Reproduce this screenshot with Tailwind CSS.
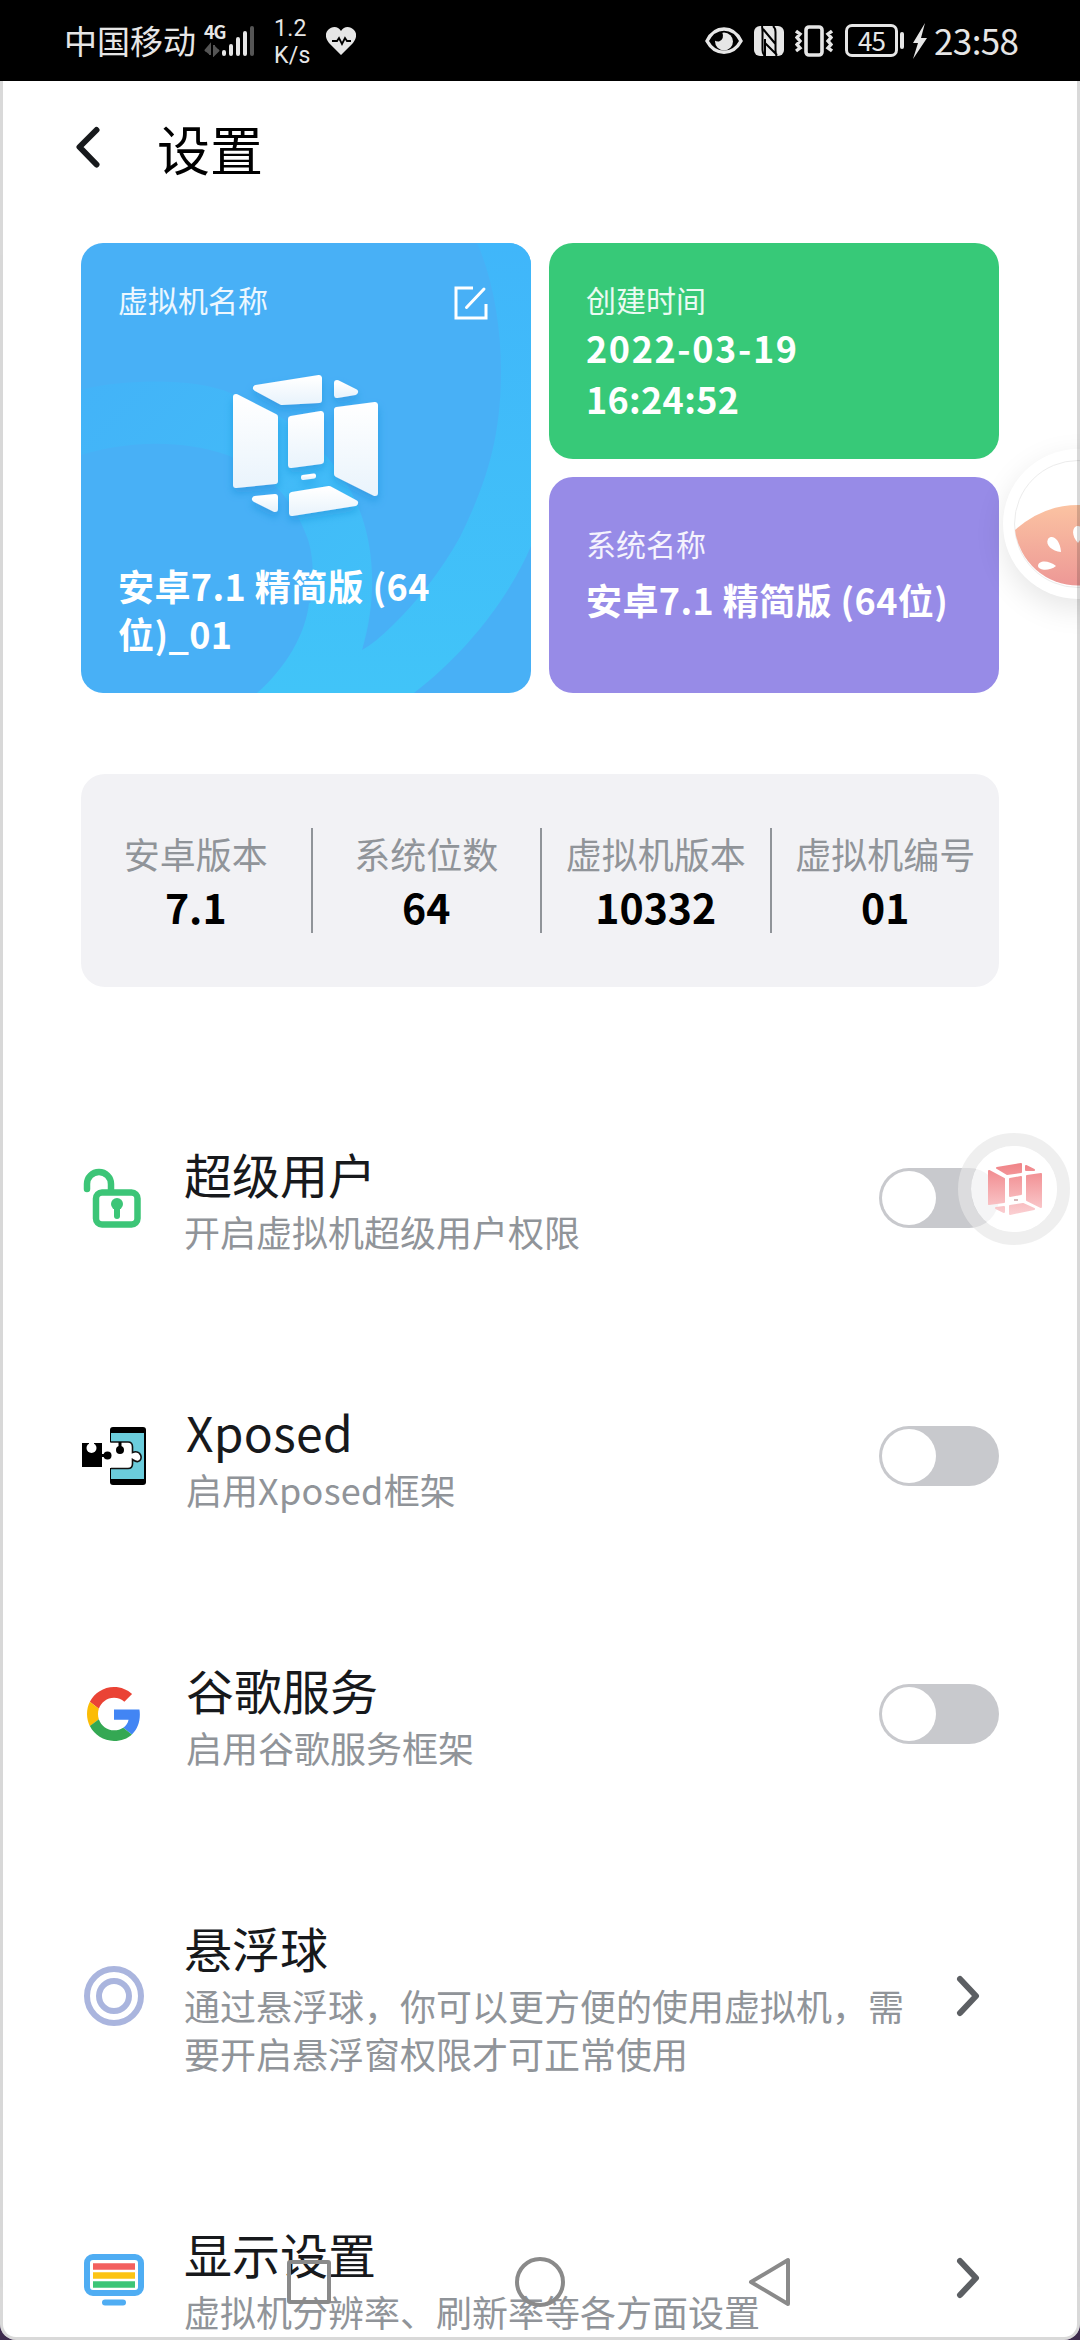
<!DOCTYPE html>
<html lang="zh-CN">
<head>
<meta charset="utf-8">
<title>设置</title>
<script src="https://cdn.jsdelivr.net/npm/@tailwindcss/browser@4"></script>
</head>
<body class="relative w-[1080px] h-[2340px] overflow-hidden bg-[#3d2b4d] font-['Noto_Sans_CJK_SC',sans-serif]">
<div class="relative w-[1080px] h-[2340px] overflow-hidden bg-white rounded-b-[16px] flex flex-col">

  <!-- status bar -->
  <header class="h-[81px] shrink-0 bg-black text-[#e6e6e6] flex items-center justify-between pl-[64px] pr-[62px]">
    <div class="flex items-center h-full">
      <span class="text-[33px] leading-[81px] w-[140px] whitespace-nowrap">中国移动</span>
      <div class="relative w-[52px] h-[32px]">
        <span class="absolute left-0 top-[-3px] text-[18px] leading-[18px] font-bold tracking-[-1px]">4G</span>
        <svg class="absolute inset-0" width="52" height="32" viewBox="0 0 52 32">
          <path d="M1 26L6 20V30M10 20V30L15 25" fill="#555" stroke="#555" stroke-width="2"/>
          <g stroke="#e6e6e6" stroke-width="4" stroke-linecap="round"><path d="M20 27v2M27 21v8M34 14v15M41 8v21"/><path d="M48 3v26" stroke="#555"/></g>
        </svg>
      </div>
      <div class="ml-[18px] mt-[2px] w-[52px] font-[Roboto] text-[23px] leading-[27px] tracking-[0.3px] flex flex-col"><span>1.2</span><span>K/s</span></div>
      <svg width="30" height="28" viewBox="0 0 30 28"><path d="M15 28L3 16C-1 11-1 6 2 3C6-1 12-1 15 4C18-1 24-1 28 3C31 6 31 11 27 16Z" fill="#e6e6e6"/><path d="M6 14h5l2-3 3 6 3-6 2 3h4" stroke="#000" stroke-width="1.8" fill="none"/></svg>
    </div>
    <div class="flex items-center h-full">
      <svg width="38" height="28" viewBox="0 0 38 28" class="mr-[11px]"><path d="M2 14C10-2 28-2 36 14C28 29 10 29 2 14Z" fill="none" stroke="#e6e6e6" stroke-width="3.4"/><circle cx="19" cy="14.500" r="9" fill="#e6e6e6"/><path d="M9 14V8L17 4.500Q20 12 14 14.500Q12 15 9 13Z" fill="#000"/></svg>
      <svg width="30" height="30" viewBox="0 0 30 30" class="mr-[11px]"><rect width="30" height="30" rx="6" fill="#e6e6e6"/><path d="M8 0Q8.500 3 8.500 6V24Q8.500 28 11 30M19 0Q21.500 2 21.500 6V24Q21.500 27 22.500 30M9 3L21.500 18M11 13V30M11 17L23 29" fill="none" stroke="#000" stroke-width="2"/></svg>
      <svg width="38" height="32" viewBox="0 0 38 32" class="mr-[12px]" fill="none" stroke="#e6e6e6" stroke-width="3.600"><rect x="11" y="2" width="16" height="28" rx="3"/><path d="M1 6l4 3-3 3.500 3 3.500-3 3.500 3 3.500-4 3M37 6l-4 3 3 3.500-3 3.500 3 3.500-3 3.500 4 3" stroke-width="3.4"/></svg>
      <div class="w-[53px] h-[33px] border-[3px] border-[#e6e6e6] rounded-[7px] flex items-center justify-center text-[26px] leading-[26px] tracking-[-1px] pb-[2px]">45</div>
      <div class="w-[4px] h-[17px] rounded-[2px] bg-[#e6e6e6] ml-[2px] mr-[8px]"></div>
      <svg width="15" height="36" viewBox="0 0 15 36" class="mr-[7px]"><path d="M13 0L1 20h5L1 36L15 15H9z" fill="#e6e6e6"/></svg>
      <span class="text-[35px] leading-[78px] tracking-[-0.600px] w-[84px] whitespace-nowrap pb-[2px]">23:58</span>
    </div>
  </header>

  <!-- title bar -->
  <div class="h-[162px] shrink-0 flex items-start pl-[75px] pt-[27px]">
    <svg width="28" height="42" viewBox="0 0 28 42" class="mt-[18px] mr-[54px]"><path d="M21.500 4L4.500 21L21.500 38.500" fill="none" stroke="#17191c" stroke-width="6" stroke-linecap="round" stroke-linejoin="round"/></svg>
    <h1 class="text-[53px] leading-[80px] text-black">设置</h1>
  </div>

  <!-- info cards -->
  <section class="mx-[81px] h-[450px] shrink-0 grid grid-cols-2 grid-rows-2 gap-[18px]">
    <div class="relative row-span-2 rounded-[22px] overflow-hidden bg-[#48b0f6] text-white">
      <svg class="absolute inset-0" width="450" height="450" viewBox="0 0 450 450">
        <defs>
          <linearGradient id="sweep" x1="0" y1="0" x2="0" y2="1"><stop offset="0" stop-color="#40b6fa"/><stop offset="1" stop-color="#41c4f8"/></linearGradient>
          <linearGradient id="arc" x1="0" y1="0" x2="1" y2="1"><stop offset="0" stop-color="#43b3f8"/><stop offset="1" stop-color="#41c1f8"/></linearGradient>
          <linearGradient id="panel" x1="0" y1="0" x2="0" y2="1"><stop offset="0" stop-color="#fff"/><stop offset="1" stop-color="#eaf4fc"/></linearGradient>
          <filter id="lift" x="-20%" y="-20%" width="140%" height="150%"><feDropShadow dx="0" dy="5" stdDeviation="4" flood-color="#1f86d0" flood-opacity=".45"/></filter>
        </defs>
        <path d="M0 147C30 138 110 132 152 151C220 175 265 225 281 274C295 315 294 365 281 407L209 414C235 375 236 320 226 294C210 250 180 225 146 212C100 196 45 198 0 212Z" fill="url(#arc)"/>
        <path d="M396 0C412 35 420 85 420 127C420 190 408 235 379 294C360 328 335 360 312 382C300 394 290 402 281 407L290 360L228 360C225 390 205 425 176 450H333C385 410 428 355 450 303V0Z" fill="url(#sweep)"/>
        <g fill="url(#panel)" stroke="url(#panel)" stroke-width="6" stroke-linejoin="round" filter="url(#lift)">
          <path d="M175 145L238 135V157L201 159Z"/><path d="M256 140L274 149L256 152Z"/>
          <path d="M155 154L194 174V238L155 242Z"/><path d="M210 176L240 171V218L210 222Z"/>
          <path d="M256 167L294 162V250L256 231Z"/><path d="M174 256L194 254V266Z"/>
          <path d="M211 252L248 246L274 260L211 270Z"/><path d="M222 234L233 232.500V233.500L222 235Z" stroke-width="4"/>
        </g>
        <g fill="none" stroke="#fff" stroke-width="3"><path d="M392 45H375V75H405V61"/><path d="M385.500 64.500L403 46" stroke-linecap="round"/></g>
      </svg>
      <div class="relative px-[37px] pt-[34px] text-[30px] leading-[44px] text-white/90">虚拟机名称</div>
      <div class="relative pl-[37px] pt-[240px] text-[36px] leading-[48px] font-bold whitespace-nowrap tracking-[0.400px]">安卓7.1 精简版 (64<br>位)_01</div>
    </div>
    <div class="rounded-[24px] bg-[#37c978] pl-[37px] pt-[34px] text-white">
      <div class="text-[30px] leading-[44px] text-white/90">创建时间</div>
      <div class="pt-px text-[36px] leading-[51px] font-bold"><span class="tracking-[1.600px]">2022-03-19</span><br><span class="tracking-[0.300px]">16:24:52</span></div>
    </div>
    <div class="rounded-[24px] bg-[#978be7] pl-[37px] pt-[44px] text-white">
      <div class="text-[30px] leading-[44px] text-white/90">系统名称</div>
      <div class="pt-[9px] text-[36px] leading-[51px] font-bold whitespace-nowrap tracking-[0.400px]">安卓7.1 精简版 (64位)</div>
    </div>
  </section>

  <!-- numbers -->
  <section class="mx-[81px] mt-[81px] h-[213px] shrink-0 rounded-[24px] bg-[#f2f2f5] grid grid-cols-4 items-center text-center">
    <div class="h-[105px]"><div class="text-[36px] leading-[51px] text-[#909499]">安卓版本</div><div class="text-[41px] leading-[54px] font-bold">7.1</div></div>
    <div class="h-[105px] border-l-2 border-[#909499]"><div class="text-[36px] leading-[51px] text-[#909499]">系统位数</div><div class="text-[41px] leading-[54px] font-bold">64</div></div>
    <div class="h-[105px] border-l-2 border-[#909499]"><div class="text-[36px] leading-[51px] text-[#909499]">虚拟机版本</div><div class="text-[41px] leading-[54px] font-bold">10332</div></div>
    <div class="h-[105px] border-l-2 border-[#909499]"><div class="text-[36px] leading-[51px] text-[#909499]">虚拟机编号</div><div class="text-[41px] leading-[54px] font-bold">01</div></div>
  </section>

  <!-- settings list -->
  <main class="px-[81px] pt-[82px] flex flex-col">
    <div class="h-[258px] flex items-center">
      <div class="w-[103px]"><svg width="66" height="60" viewBox="0 0 66 60" fill="none" stroke="#3cc577" stroke-width="6.500" stroke-linecap="round"><path d="M6 21V16a12 12 0 0 1 24 0V23"/><rect x="15" y="24.500" width="41.500" height="32" rx="6"/><circle cx="36" cy="36" r="6" fill="#3cc577" stroke="none"/><path d="M36 38V48" stroke-width="6"/></svg></div>
      <div class="flex-1"><div class="text-[48px] leading-[64px] pb-[2px] text-[#17191c]">超级用户</div><div class="text-[36px] leading-[48px] text-[#909499]">开启虚拟机超级用户权限</div></div>
      <div class="w-[120px] h-[60px] rounded-full bg-[#c8c9cd] p-[3px]"><div class="size-[54px] rounded-full bg-white"></div></div>
    </div>
    <div class="h-[258px] flex items-center">
      <div class="w-[105px]"><svg width="66" height="60" viewBox="0 0 66 60">
        <rect x="29" y="1" width="36" height="58" rx="3" fill="#000"/><rect x="30" y="7" width="33" height="46" fill="#6bcddc"/>
        <path d="M27 16.500H47Q51 16.500 51 21V38Q51 42 47 42H27Z" fill="#fff"/>
        <path d="M30 16H47Q51.500 16 51.500 21V26.500C60 23 63 34 57 35.500C54.500 36 53 34.500 51.500 33.500V38Q51.500 42.500 47 42.500H30" fill="#fff" stroke="#111" stroke-width="1.600"/>
        <circle cx="39" cy="24" r="4"/><path d="M39 16V24" stroke="#000" stroke-width="3"/>
        <rect x="1" y="17" width="20" height="24"/><circle cx="10.500" cy="22" r="5" fill="#fff"/><rect x="8" y="15" width="5" height="5" fill="#fff"/><path d="M21 29.500h6" stroke="#000" stroke-width="3"/><circle cx="26.500" cy="29.500" r="4"/></svg></div>
      <div class="flex-1"><div class="text-[48px] leading-[64px] pb-[2px] text-[#17191c] tracking-[0.300px]">Xposed</div><div class="text-[36px] leading-[48px] text-[#909499]">启用<span class="tracking-[0.300px]">Xposed</span>框架</div></div>
      <div class="w-[120px] h-[60px] rounded-full bg-[#c8c9cd] p-[3px]"><div class="size-[54px] rounded-full bg-white"></div></div>
    </div>
    <div class="h-[258px] flex items-center">
      <div class="w-[105px] pl-[6px]"><svg width="54" height="54" viewBox="0 0 48 48"><path fill="#ea4335" d="M24 9.500c3.540 0 6.710 1.220 9.210 3.600l6.850-6.850C35.900 2.380 30.470 0 24 0 14.620 0 6.510 5.380 2.560 13.220l7.980 6.190C12.430 13.720 17.740 9.500 24 9.500z"/><path fill="#4285f4" d="M46.980 24.550c0-1.570-.15-3.090-.38-4.550H24v9.020h12.940c-.58 2.960-2.260 5.480-4.780 7.180l7.730 6c4.510-4.180 7.090-10.360 7.090-17.650z"/><path fill="#fbbc05" d="M10.530 28.590c-.48-1.450-.76-2.990-.76-4.590s.27-3.140.76-4.590l-7.980-6.190C.92 16.460 0 20.120 0 24c0 3.880.92 7.540 2.560 10.780l7.970-6.190z"/><path fill="#34a853" d="M24 48c6.480 0 11.930-2.130 15.890-5.810l-7.730-6c-2.150 1.450-4.920 2.300-8.160 2.300-6.260 0-11.570-4.220-13.470-9.910l-7.980 6.190C6.510 42.620 14.620 48 24 48z"/></svg></div>
      <div class="flex-1"><div class="text-[48px] leading-[64px] pb-[2px] text-[#17191c]">谷歌服务</div><div class="text-[36px] leading-[48px] text-[#909499]">启用谷歌服务框架</div></div>
      <div class="w-[120px] h-[60px] rounded-full bg-[#c8c9cd] p-[3px]"><div class="size-[54px] rounded-full bg-white"></div></div>
    </div>
    <div class="h-[306px] flex items-center">
      <div class="w-[103px]"><svg width="66" height="60" viewBox="0 0 66 60" fill="none" stroke="#aab5de" stroke-width="6"><circle cx="33" cy="30" r="27"/><circle cx="33" cy="30" r="15"/></svg></div>
      <div class="flex-1"><div class="text-[48px] leading-[64px] pb-[2px] text-[#17191c]">悬浮球</div><div class="text-[36px] leading-[48px] text-[#909499] whitespace-nowrap">通过悬浮球，你可以更方便的使用虚拟机，需<br>要开启悬浮窗权限才可正常使用</div></div>
      <svg width="30" height="42" viewBox="0 0 30 42" class="mr-[14px]"><path d="M5 4L21 21L5 38" fill="none" stroke="#5c5f63" stroke-width="6" stroke-linecap="round" stroke-linejoin="round"/></svg>
    </div>
    <div class="h-[258px] flex items-center">
      <div class="w-[103px] pt-[3px]"><svg width="66" height="52" viewBox="0 0 66 52"><rect x="6" y="3" width="54" height="36" rx="6" fill="#fff" stroke="#4fadf3" stroke-width="6"/><path d="M12 12.500H54" stroke="#f3605f" stroke-width="6.500"/><path d="M12 21.500H54" stroke="#fcc414" stroke-width="6.500"/><path d="M12 30.500H54" stroke="#3cc577" stroke-width="6.500"/><path d="M24 48.500H42" stroke="#4fadf3" stroke-width="6" stroke-linecap="round"/></svg></div>
      <div class="flex-1"><div class="text-[48px] leading-[64px] pb-[2px] text-[#17191c]">显示设置</div><div class="text-[36px] leading-[48px] text-[#909499] whitespace-nowrap">虚拟机分辨率、刷新率等各方面设置</div></div>
      <svg width="30" height="42" viewBox="0 0 30 42" class="mr-[14px]"><path d="M5 4L21 21L5 38" fill="none" stroke="#5c5f63" stroke-width="6" stroke-linecap="round" stroke-linejoin="round"/></svg>
    </div>
  </main>

  <!-- floating assistant, docked at the screen edge -->
  <div class="absolute left-[1003px] top-[449px] size-[150px] rounded-full bg-white shadow-[0_10px_30px_rgba(0,0,0,0.1)]">
    <svg width="150" height="150" viewBox="0 0 150 150">
      <defs><linearGradient id="melon" x1="0" y1="0" x2="0" y2="1"><stop offset="0" stop-color="#fbc3a2"/><stop offset="1" stop-color="#ed9896"/></linearGradient></defs>
      <circle cx="75" cy="75" r="63.500" fill="#fff" stroke="#ececec"/>
      <path d="M12 81Q40 56 75 56Q110 56 138 81A63.500 63.500 0 0 1 12 81Z" fill="url(#melon)"/>
      <g fill="#fff"><path d="M58 103C49 102 42 96 45 90C49 85 57 90 58 103Z"/><path d="M53 117C46 111 35 111 35 117C36 122 47 122 53 117Z"/><path d="M75 94C68 87 69 77 75 77C81 77 80 88 75 94Z"/></g>
    </svg>
  </div>

  <!-- virtual machine floating ball -->
  <svg class="absolute left-[958px] top-[1133px]" width="112" height="112" viewBox="0 0 112 112">
    <defs><linearGradient id="red" gradientUnits="userSpaceOnUse" x1="0" y1="30" x2="0" y2="84"><stop offset="0" stop-color="#f08286"/><stop offset="1" stop-color="#fbd3d6"/></linearGradient></defs>
    <circle cx="56" cy="56" r="49.500" fill="none" stroke="#e6e6e6" stroke-opacity=".65" stroke-width="13"/>
    <circle cx="56" cy="56" r="43" fill="#fff" fill-opacity=".82"/>
    <g fill="url(#red)" stroke="url(#red)" stroke-width="2" stroke-linejoin="round">
      <path d="M39 35L63 31V39L49 41Z"/><path d="M68 33L76 37H68Z"/><path d="M31 38L46 46V69L31 71Z"/><path d="M52 46L63 44V61L52 63Z"/><path d="M69 43L83 41V74L69 67Z"/><path d="M38 75L46 74V79Z"/><path d="M52 73L65 71L76 76L52 81Z"/>
    </g>
    <path d="M56 67h4" stroke="#c9a0a3" stroke-width="1.500"/>
  </svg>

  <!-- navigation keys -->
  <nav class="absolute left-[287px] top-[2257px] w-[504px] flex items-center justify-between">
    <svg width="44" height="50" viewBox="0 0 44 50" fill="none" stroke="#8a8a8a" stroke-width="4"><rect x="2" y="5" width="40" height="40" rx="1"/></svg>
    <svg width="50" height="50" viewBox="0 0 50 50" class="ml-px" fill="none" stroke="#8a8a8a" stroke-width="4"><circle cx="25" cy="25" r="23"/></svg>
    <svg width="44" height="50" viewBox="0 0 44 50" fill="none" stroke="#8a8a8a" stroke-width="4" stroke-linejoin="round"><path d="M41 3V47L4 25Z"/></svg>
  </nav>

  <!-- screen frame -->
  <div class="absolute left-0 right-0 top-[81px] bottom-0 border-x-[3px] border-b-[3px] border-black/15 rounded-b-[16px] pointer-events-none"></div>
</div>
</body>
</html>
